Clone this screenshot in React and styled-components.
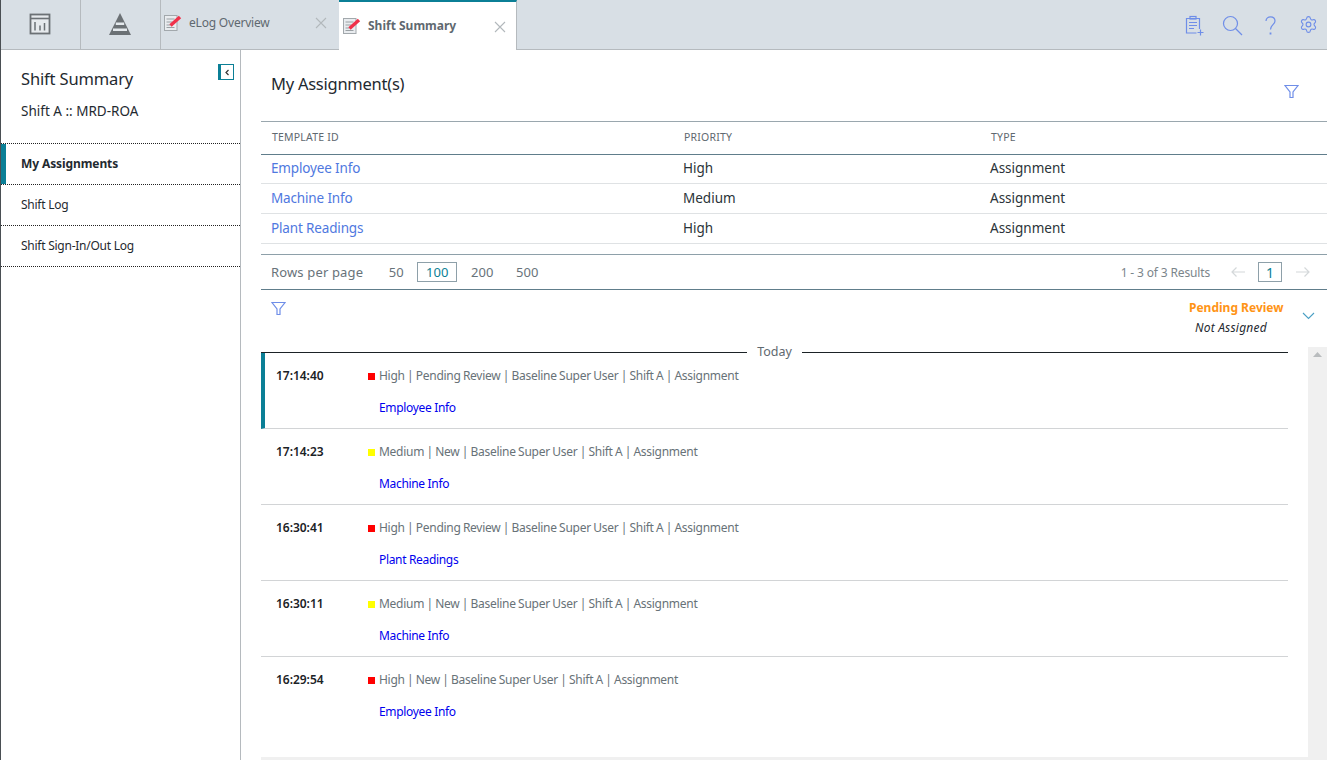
import React from 'react';
import styled, { createGlobalStyle } from 'styled-components';
import { Settings } from 'lucide-react';

const GlobalStyle = createGlobalStyle`
  html, body { margin: 0; padding: 0; height: 100%; background: #fff; overflow: hidden; }
  body { font-family: "Noto Sans", "Liberation Sans", sans-serif; color: #1f2a30; }
  * { box-sizing: border-box; }
`;

const assignments = [
  { id: 'Employee Info', priority: 'High' },
  { id: 'Machine Info', priority: 'Medium' },
  { id: 'Plant Readings', priority: 'High' }
];

const feed = [
  { time: '17:14:40', level: 'red', text: 'High | Pending Review | Baseline Super User | Shift A | Assignment', link: 'Employee Info', active: true },
  { time: '17:14:23', level: 'yellow', text: 'Medium | New | Baseline Super User | Shift A | Assignment', link: 'Machine Info' },
  { time: '16:30:41', level: 'red', text: 'High | Pending Review | Baseline Super User | Shift A | Assignment', link: 'Plant Readings' },
  { time: '16:30:11', level: 'yellow', text: 'Medium | New | Baseline Super User | Shift A | Assignment', link: 'Machine Info' },
  { time: '16:29:54', level: 'red', text: 'High | New | Baseline Super User | Shift A | Assignment', link: 'Employee Info' }
];

const Page = styled.div`
  width: 1327px;
  height: 760px;
  display: flex;
  flex-direction: column;
  overflow: hidden;
  border-left: 1px solid #4a4f53;
`;

const TabBar = styled.div`
  height: 50px;
  flex: none;
  display: flex;
  background: #d8dfe5;
  border-bottom: 1px solid #b5babe;
`;

const IconTab = styled.div`
  width: 80px;
  display: flex;
  align-items: center;
  justify-content: center;
  padding: 0 2px 2px 0;
  border-right: 1px solid #b5babe;
`;

const Tab = styled.div`
  width: 178px;
  height: ${p => (p.$active ? '50px' : '49px')};
  display: flex;
  align-items: flex-start;
  position: relative;
  padding: ${p => (p.$active ? '15px 0 0 4px' : '14px 0 0 3px')};
  background: ${p => (p.$active ? '#fff' : 'transparent')};
  border-top: ${p => (p.$active ? '2px solid #0b7f96' : 'none')};
  border-right: ${p => (p.$active ? '1px solid #b5babe' : 'none')};
  ${p => p.$active && 'margin-bottom: -1px;'}
`;

const TabLabel = styled.span`
  margin-left: 7px;
  font-size: 12px;
  letter-spacing: ${p => (p.$active ? '0' : '-0.2px')};
  line-height: 18px;
  color: #5f6970;
  font-weight: ${p => (p.$active ? 700 : 400)};
`;

const TabClose = styled.span`
  position: absolute;
  right: ${p => (p.$active ? '10px' : '12px')};
  top: ${p => (p.$active ? '19px' : '17px')};
  display: flex;
`;

const ToolIcons = styled.div`
  margin-left: auto;
  display: flex;
  align-items: center;
  gap: 16px;
  padding: 0 8px 0 0;
`;

const GearSlot = styled.div`
  width: 22px;
  height: 22px;
  display: flex;
  align-items: center;
  justify-content: center;
  color: #6f8ee8;
`;

const Body = styled.div`
  flex: 1;
  display: flex;
  min-height: 0;
`;

const Sidebar = styled.aside`
  width: 240px;
  flex: none;
  border-right: 1px solid #b5babe;
  position: relative;
`;

const SideHead = styled.div`
  height: 93px;
  padding: 17px 0 0 20px;
`;

const SideTitle = styled.div`
  font-size: 16.5px;
  letter-spacing: -0.15px;
  line-height: 24px;
`;

const SideSub = styled.div`
  font-size: 13.5px;
  line-height: 20px;
  margin-top: 10px;
`;

const Collapse = styled.button`
  position: absolute;
  top: 14px;
  right: 6px;
  width: 16px;
  height: 16px;
  padding: 0;
  display: flex;
  align-items: center;
  justify-content: center;
  background: #fff;
  border: 1px solid #0b7f96;
  border-left-width: 3px;
`;

const NavList = styled.nav`
  border-top: 1px dotted #222;
`;

const NavItem = styled.div`
  height: 41px;
  display: flex;
  align-items: center;
  padding: 0 0 2px 20px;
  font-size: 12px;
  letter-spacing: ${p => (p.$active ? '-0.1px' : '-0.25px')};
  font-weight: ${p => (p.$active ? 700 : 400)};
  border-bottom: 1px dotted #222;
  position: relative;
  &::before {
    content: '';
    display: ${p => (p.$active ? 'block' : 'none')};
    position: absolute;
    left: 0;
    top: 0;
    bottom: 0;
    width: 5px;
    background: #0b7f96;
  }
`;

const Main = styled.main`
  flex: 1;
  min-width: 0;
  padding-left: 20px;
  display: flex;
  flex-direction: column;
`;

const TitleRow = styled.div`
  height: 71px;
  flex: none;
  display: flex;
  justify-content: space-between;
  padding: 22px 28px 0 10px;
`;

const PageTitle = styled.h1`
  margin: 0;
  font-size: 16.5px;
  letter-spacing: -0.25px;
  line-height: 24px;
  font-weight: 400;
`;

const TitleFilter = styled.div`
  display: flex;
  padding-top: 12px;
`;

const Table = styled.div`
  flex: none;
  border-top: 1px solid #9aa7ae;
`;

const TableHead = styled.div`
  display: grid;
  grid-template-columns: 412px 307px 1fr;
  align-items: center;
  height: 33px;
  padding: 0 0 2px 10px;
  border-bottom: 1px solid #607d8b;
`;

const TableRow = styled.div`
  display: grid;
  grid-template-columns: 412px 307px 1fr;
  align-items: center;
  height: 30px;
  padding: 0 0 1px 10px;
  border-bottom: 1px solid #dfe2e4;
  &:nth-child(2) {
    height: 29px;
    padding-bottom: 2px;
  }
`;

const HeadCell = styled.div`
  font-size: 10.5px;
  letter-spacing: 0.2px;
  color: #5f6970;
  padding-left: 1px;
`;

const Cell = styled.div`
  font-size: 13.5px;
  color: #2a3338;
`;

const CellLink = styled.a`
  font-size: 13.5px;
  letter-spacing: -0.15px;
  color: #4f78e0;
`;

const Pager = styled.div`
  height: 36px;
  margin-top: 10px;
  flex: none;
  display: flex;
  align-items: center;
  padding: 0 16px 0 10px;
  border-top: 1px solid #8ea0a9;
  border-bottom: 1px solid #607d8b;
  font-size: 13px;
  color: #68737a;
`;

const RowsLabel = styled.span`
  letter-spacing: 0.15px;
  margin-right: 13px;
`;

const RowsOption = styled.span`
  width: 40px;
  height: 20px;
  margin: 0 5px 0 ${p => (p.$active ? '-4px' : '0')};
  display: flex;
  align-items: center;
  justify-content: center;
  color: ${p => (p.$active ? '#0b7f96' : '#68737a')};
  border: 1px solid ${p => (p.$active ? '#8ea0a9' : 'transparent')};
`;

const Results = styled.span`
  margin-left: auto;
  font-size: 12px;
  letter-spacing: -0.15px;
  color: #7b858b;
  margin-right: 20px;
`;

const PageBox = styled.span`
  width: 24px;
  height: 20px;
  margin: 0 13px 0 12px;
  display: flex;
  align-items: center;
  justify-content: center;
  font-size: 14px;
  color: #0b7f96;
  border: 1px solid #8ea0a9;
`;

const FilterRow = styled.div`
  height: 57px;
  flex: none;
  display: flex;
  padding: 11px 12px 0 10px;
`;

const StatusGroup = styled.div`
  margin: -3px 0 0 auto;
  display: flex;
  flex-direction: column;
  align-items: flex-start;
  width: 95px;
  font-size: 12px;
  line-height: 20px;
  white-space: nowrap;
`;

const PendingText = styled.span`
  color: #ff9416;
  font-weight: 700;
`;

const NotAssigned = styled.span`
  font-style: italic;
  font-size: 12px;
  letter-spacing: 0.2px;
  margin-left: 6px;
  color: #1f2a30;
`;

const Chevron = styled.div`
  display: flex;
  margin: 11px 0 0 18px;
`;

const FeedWrap = styled.div`
  flex: 1;
  min-height: 0;
  display: flex;
  gap: 20px;
`;

const Feed = styled.div`
  width: 1027px;
  flex: none;
  padding-top: 5px;
`;

const DayDivider = styled.div`
  display: flex;
  align-items: center;
  gap: 10px;
  height: 1px;
  font-size: 12.5px;
  color: #5f6970;
  &::before, &::after {
    content: '';
    flex: 1;
    height: 1px;
    background: #1b2226;
  }
`;

const DayLabel = styled.span`
  margin-bottom: 2px;
`;

const FeedItem = styled.div`
  height: 76px;
  display: grid;
  grid-template-columns: 92px 1fr;
  grid-template-rows: 32px 1fr;
  padding-top: 14px;
  padding-left: ${p => (p.$active ? '11px' : '15px')};
  border-left: ${p => (p.$active ? '4px solid #0b7f96' : 'none')};
  border-bottom: 1px solid #d2d4d6;
  &:last-child {
    border-bottom: none;
  }
`;

const FeedTime = styled.div`
  font-size: 12px;
  font-weight: 600;
  line-height: 18px;
  letter-spacing: -0.03px;
  color: #1b2226;
`;

const FeedText = styled.div`
  display: flex;
  align-items: flex-start;
  font-size: 12px;
  line-height: 18px;
  letter-spacing: -0.27px;
  word-spacing: -0.5px;
  color: #687278;
`;

const Level = styled.i`
  width: 7px;
  height: 7px;
  margin: 6px 4px 0 0;
  background: ${p => (p.$level === 'red' ? '#ff0000' : '#ffff00')};
`;

const FeedLink = styled.a`
  grid-column: 2;
  font-size: 12px;
  line-height: 18px;
  letter-spacing: -0.33px;
  padding-left: 11px;
  color: #0000ee;
`;

const Scrollbar = styled.div`
  width: 19px;
  flex: none;
  background: #f0f0f0;
  display: flex;
  justify-content: center;
  align-items: flex-start;
  padding-top: 5px;
`;

const BottomEdge = styled.div`
  height: 3px;
  flex: none;
  background: #f0f0f0;
`;

const Ink = ({ children, w = 24, h = 24, box = '0 0 24 24' }) => (
  <svg width={w} height={h} viewBox={box} fill="none" stroke="#6f8ee8" strokeWidth="1.2">
    {children}
  </svg>
);

const FilterIcon = () => (
  <Ink w={15} h={15} box="0 0 15 15">
    <path d="M1 1.5h13L9 8v5.5H6V8z" />
  </Ink>
);

const NoteIcon = () => (
  <svg width="18" height="18" viewBox="0 0 18 18" fill="none" style={{ flex: 'none' }}>
    <rect x="0.5" y="1.5" width="12.5" height="15" fill="#e9ecef" stroke="#a2a8ac" />
    <path d="M2.5 5h8M2.500 8h6M2.500 11h4M2.500 13.500h8" stroke="#9aa0a4" />
    <path d="M6.500 11.500L16 3" stroke="#f0314a" strokeWidth="3.4" />
  </svg>
);

const CloseIcon = () => (
  <svg width="12" height="12" viewBox="0 0 12 12" stroke="#b2b8bc" strokeWidth="1.1">
    <path d="M1 1l10 10M11 1L1 11" />
  </svg>
);

const App = () => (
  <Page>
    <GlobalStyle />
    <TabBar>
      <IconTab>
        <svg width="22" height="22" viewBox="0 0 22 22" fill="#e6eaed" stroke="#6b7175" strokeWidth="1.4">
          <rect x="1.5" y="1.5" width="19" height="19" strokeWidth="1.8" />
          <path d="M1.500 5.500h19" strokeWidth="1.600" />
          <path d="M6 17.500V9M11 17.500v-5M15.500 17.500V10" strokeWidth="1.500" />
        </svg>
      </IconTab>
      <IconTab>
        <svg width="24" height="22" viewBox="0 0 24 22">
          <path d="M12 0l11 22H1z" fill="#6b7175" />
          <path d="M7.800 9.500h8.400v2.500H7.800zM5 15.500h14V18H5z" fill="#e4e9ed" />
        </svg>
      </IconTab>
      <Tab>
        <NoteIcon />
        <TabLabel>eLog Overview</TabLabel>
        <TabClose><CloseIcon /></TabClose>
      </Tab>
      <Tab $active>
        <NoteIcon />
        <TabLabel $active>Shift Summary</TabLabel>
        <TabClose $active><CloseIcon /></TabClose>
      </Tab>
      <ToolIcons>
        <Ink w={22} h={22} box="0 0 22 22">
          <path d="M13.500 19H3.500V4.500h13V15" />
          <rect x="7" y="2.500" width="6" height="2.500" />
          <path d="M6 8.500h8M6 11.500h8M6 14.500h5M14.500 18.500h6M17.500 15.500v6" />
        </Ink>
        <Ink w={22} h={22} box="0 0 22 22">
          <circle cx="9.500" cy="9.500" r="7" />
          <path d="M14.500 14.500l6.500 6.500" />
        </Ink>
        <Ink w={22} h={22} box="0 0 22 22">
          <path d="M7 7C7 1.500 16 1.500 16 7c0 3.500-4.500 4-4.500 8.500" />
          <path d="M11.500 18.500v2" strokeWidth="1.800" />
        </Ink>
        <GearSlot><Settings size={19} strokeWidth={1.4} /></GearSlot>
      </ToolIcons>
    </TabBar>
    <Body>
      <Sidebar>
        <SideHead>
          <SideTitle>Shift Summary</SideTitle>
          <SideSub>Shift A :: MRD-ROA</SideSub>
        </SideHead>
        <Collapse>
          <svg width="7" height="7" viewBox="0 0 7 7" fill="none" stroke="#333" strokeWidth="1.2">
            <path d="M4.500 1L2 3.500 4.500 6" />
          </svg>
        </Collapse>
        <NavList>
          <NavItem $active>My Assignments</NavItem>
          <NavItem>Shift Log</NavItem>
          <NavItem>Shift Sign-In/Out Log</NavItem>
        </NavList>
      </Sidebar>
      <Main>
        <TitleRow>
          <PageTitle>My Assignment(s)</PageTitle>
          <TitleFilter><FilterIcon /></TitleFilter>
        </TitleRow>
        <Table>
          <TableHead>
            <HeadCell>TEMPLATE ID</HeadCell>
            <HeadCell>PRIORITY</HeadCell>
            <HeadCell>TYPE</HeadCell>
          </TableHead>
          {assignments.map(a => (
            <TableRow key={a.id}>
              <CellLink>{a.id}</CellLink>
              <Cell>{a.priority}</Cell>
              <Cell>Assignment</Cell>
            </TableRow>
          ))}
        </Table>
        <Pager>
          <RowsLabel>Rows per page</RowsLabel>
          {['50', '100', '200', '500'].map(n => (
            <RowsOption key={n} $active={n === '100'}>{n}</RowsOption>
          ))}
          <Results>1 - 3 of 3 Results</Results>
          <svg width="16" height="12" viewBox="0 0 16 12" fill="none" stroke="#d4d8da" strokeWidth="1.200">
            <path d="M15 6H2M6.500 1.500L2 6l4.500 4.500" />
          </svg>
          <PageBox>1</PageBox>
          <svg width="16" height="12" viewBox="0 0 16 12" fill="none" stroke="#d4d8da" strokeWidth="1.200">
            <path d="M1 6h13M9.500 1.500L14 6l-4.500 4.500" />
          </svg>
        </Pager>
        <FilterRow>
          <FilterIcon />
          <StatusGroup>
            <PendingText>Pending Review</PendingText>
            <NotAssigned>Not Assigned</NotAssigned>
          </StatusGroup>
          <Chevron>
            <svg width="13" height="8" viewBox="0 0 13 8" fill="none" stroke="#4a9fc4" strokeWidth="1.100">
              <path d="M1 1l5.500 5.500L12 1" />
            </svg>
          </Chevron>
        </FilterRow>
        <FeedWrap>
          <Feed>
            <DayDivider><DayLabel>Today</DayLabel></DayDivider>
            {feed.map(f => (
              <FeedItem key={f.time} $active={f.active}>
                <FeedTime>{f.time}</FeedTime>
                <FeedText><Level $level={f.level} />{f.text}</FeedText>
                <FeedLink>{f.link}</FeedLink>
              </FeedItem>
            ))}
          </Feed>
          <Scrollbar>
            <svg width="9" height="5" viewBox="0 0 9 5" fill="#b9bcbe"><path d="M4.500 0L9 5H0z" /></svg>
          </Scrollbar>
        </FeedWrap>
        <BottomEdge />
      </Main>
    </Body>
  </Page>
);

export default App;
